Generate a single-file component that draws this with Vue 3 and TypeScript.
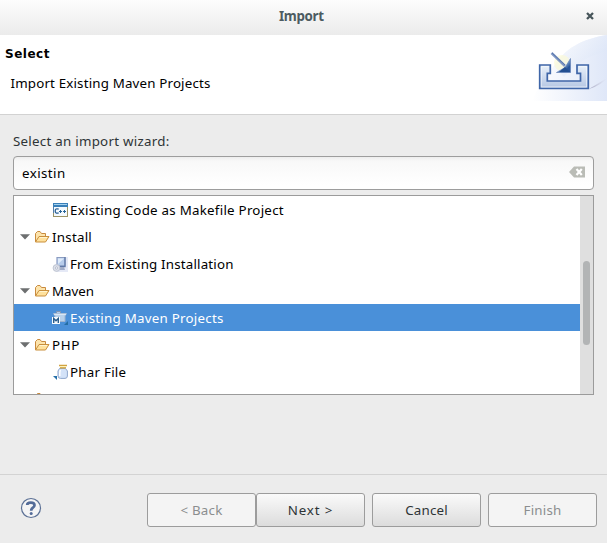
<script setup lang="ts">
import { ref } from 'vue'

type IconName = 'cpp' | 'folder' | 'install' | 'maven' | 'phar'

interface TreeItem {
  label: string
  icon: IconName
  group: boolean
  fit: string
}

const items: TreeItem[] = [
  { label: 'Existing Code as Makefile Project', icon: 'cpp', group: false, fit: 'loose' },
  { label: 'Install', icon: 'folder', group: true, fit: 'loose' },
  { label: 'From Existing Installation', icon: 'install', group: false, fit: 'regular' },
  { label: 'Maven', icon: 'folder', group: true, fit: 'plain' },
  { label: 'Existing Maven Projects', icon: 'maven', group: false, fit: 'loose' },
  { label: 'PHP', icon: 'folder', group: true, fit: 'caps' },
  { label: 'Phar File', icon: 'phar', group: false, fit: 'loose' },
  { label: '', icon: 'folder', group: true, fit: 'plain' },
]

const selected = ref(4)
const filter = ref('existin')

const buttons = [
  { label: '< Back', disabled: true, name: 'back' },
  { label: 'Next >', disabled: false, name: 'forward' },
  { label: 'Cancel', disabled: false, name: 'cancel' },
  { label: 'Finish', disabled: true, name: 'finish' },
]
</script>

<template>
  <div class="dialog">
    <header class="titlebar">
      <span class="title">Import</span>
      <svg class="close" width="8" height="8" viewBox="0 0 8 8">
        <path d="M1 1 L7 7 M7 1 L1 7" stroke="#47555a" stroke-width="2.3" />
      </svg>
    </header>

    <section class="banner">
      <div class="banner-text">
        <h1>Select</h1>
        <p>Import Existing Maven Projects</p>
      </div>
      <svg class="banner-art" width="75" height="66" viewBox="0 0 75 66">
        <defs>
          <linearGradient id="sweep" x1="0" y1="0" x2="1" y2="1">
            <stop offset="0" stop-color="#ffffff" />
            <stop offset="1" stop-color="#cfdcf4" />
          </linearGradient>
          <linearGradient id="floor" x1="0" y1="0" x2="1" y2="0">
            <stop offset="0" stop-color="#ffffff" />
            <stop offset="1" stop-color="#dfe7f8" />
          </linearGradient>
          <linearGradient id="tray" x1="0" y1="0" x2="0" y2="1">
            <stop offset="0" stop-color="#e9f1fa" />
            <stop offset="1" stop-color="#b4c6e3" />
          </linearGradient>
          <linearGradient id="shade" x1="0" y1="0" x2="1" y2="0">
            <stop offset="0" stop-color="#8f8fae" stop-opacity="0.8" />
            <stop offset="1" stop-color="#d8d8e8" stop-opacity="0.1" />
          </linearGradient>
          <linearGradient id="head" x1="0" y1="0" x2="1" y2="1">
            <stop offset="0.4" stop-color="#9fbfe2" />
            <stop offset="0.75" stop-color="#28559a" />
          </linearGradient>
        </defs>
        <path d="M22 31 C33 14 49 4 75 0 V66 H0 C6 52 13 40 22 31Z" fill="url(#floor)" />
        <path d="M22 31 C33 14 49 4 75 0 V16 C58 20 44 28 32 42Z" fill="url(#sweep)" opacity=".55" />
        <path d="M57 54 L75 43 Q70 50 57 54Z" fill="url(#shade)" />
        <circle cx="30" cy="28" r="8" fill="#fbf9d7" opacity=".7" />
        <path
          d="M7.7 30 H18.3 V38.3 H15.3 V46 H48.5 V38.3 H45 V30 H56.3 V53.5 H7.7Z"
          fill="url(#tray)" stroke="#3f66a8" stroke-width="1.7"
        />
        <path d="M9.5 31.7 H16.6 M9.3 32 V51.9 H54.6 V31.7 H47" fill="none" stroke="#fff" stroke-opacity=".55" />
        <path d="M19.5 18 L33 31" stroke="#8198c4" stroke-width="2.5" />
        <path d="M20 18 L33 30" stroke="#5876ac" />
        <path d="M38.5 23.5 V37.5 H24.5 L33 32.5Z" fill="url(#head)" stroke="#6483b8" stroke-width=".7" />
        <path d="M33 32 L38 37 H27Z" fill="#234f91" />
      </svg>
    </section>

    <main class="body">
      <label class="prompt">Select an import wizard:</label>
      <div class="filter">
        <span class="filter-text">{{ filter }}</span>
        <svg width="16" height="12" viewBox="0 0 16 12">
          <path d="M0 6 L5 0.5 H16 V11.5 H5Z" fill="#babcb6" />
          <path d="M7.5 3 L12.8 9 M12.8 3 L7.5 9" stroke="#fff" stroke-width="2.2" />
        </svg>
      </div>

      <div class="tree">
        <div class="rows">
          <div
            v-for="(item, i) in items"
            :key="i"
            class="row"
            :class="[item.group ? 'group' : 'leaf', { selected: i === selected }]"
            @click="selected = i"
          >
            <svg v-if="item.group" class="expander" :class="{ blank: !item.label }" width="10" height="6" viewBox="0 0 10 6">
              <path d="M0 0.3 H10 L5 5.6Z" fill="#6d6f70" />
            </svg>

            <svg v-if="item.icon === 'folder'" class="icon" width="16" height="16" viewBox="0 0 16 16">
              <path d="M1.5 13 V4.5 L3.5 2.5 H6 L7.5 4.5 H11.5 V7" fill="#fde4ac" stroke="#c98b3f" />
              <path d="M1.5 13 L5 7.5 H15 L11.5 13Z" fill="#ffe19c" stroke="#c98f3d" />
              <path d="M5.6 8.5 H13" stroke="#fff4cf" />
            </svg>
            <svg v-else-if="item.icon === 'cpp'" class="icon" width="16" height="16" viewBox="0 0 16 16">
              <rect x="1.5" y="1.5" width="14" height="13" fill="#f4faff" stroke="#9c9365" />
              <path d="M1 1 H16 V5 H1Z" fill="#397fb9" />
              <path d="M2 2.5 H15" stroke="#a4d2ee" />
              <path d="M1.5 5 V11" stroke="#527ea9" />
              <path d="M6.7 7.1 Q3.2 6 3.2 9 Q3.2 12 6.7 10.9" fill="none" stroke="#285e93" stroke-width="1.3" />
              <path d="M7 9.5 H10 M11 9.5 H14 M8.5 8 V11 M12.5 8 V11" stroke="#286599" />
            </svg>
            <svg v-else-if="item.icon === 'install'" class="icon" width="16" height="16" viewBox="0 0 16 16">
              <path d="M4 1 H16 V16 H4Z" fill="#e5e9f6" />
              <rect x="5" y="1.5" width="8" height="8.5" fill="#b7cceb" stroke="#8b9cc0" />
              <path d="M6 2.5 H12 L6 8Z" fill="#dfebfa" />
              <path d="M13 1 V10.5 H7" fill="none" stroke="#6079a7" stroke-width="1.3" />
              <path d="M8 11 L12 11 L13 14 H8Z" fill="#a2adc8" />
              <circle cx="4.5" cy="12" r="3.4" fill="#dde0e9" stroke="#c0c6d3" />
              <circle cx="4.5" cy="12" r="1.1" fill="#fff" stroke="#98a2b8" stroke-width=".6" />
            </svg>
            <svg v-else-if="item.icon === 'maven'" class="icon" width="16" height="16" viewBox="0 0 16 16">
              <path d="M4.5 4 V1.5 H8.5 V3.5" fill="#aecaec" stroke="#8395b1" />
              <path d="M1.5 3.5 H14.5 L13 6 V11.5 H3 V6Z" fill="#b8d1eb" stroke="#9db3cf" />
              <path d="M2 4.3 H14" stroke="#e0edf9" />
              <rect x="0" y="7" width="8" height="7" fill="#f7fbfe" />
              <path d="M1.7 13 V8.5 L4 10.8 L6.3 8.5 V13" fill="none" stroke="#295d8d" stroke-width="1.4" />
              <path d="M16 11 V15 H12Z" fill="#246da3" />
            </svg>
            <svg v-else class="icon" width="16" height="16" viewBox="0 0 16 16">
              <path d="M7.5 4.5 H13.5 L15.4 7 V12 Q15.4 14.4 13 14.4 H8.5 Q6 14.4 6 12 V7Z" fill="#d3e2f8" stroke="#8fa6cc" />
              <path d="M8.5 6 Q7.6 7 7.8 12" fill="none" stroke="#fff" stroke-width="1.5" />
              <path d="M7 1.5 H15 M8 3.8 H14" stroke="#d2a33e" stroke-width="1.4" />
              <path d="M8 2.7 H14" stroke="#fff5b8" />
              <path d="M1 12 H5 V16Z" fill="#2670a9" />
            </svg>
            <span class="label" :class="item.fit">{{ item.label }}</span>
          </div>
        </div>
        <div class="scrollbar"><div class="thumb"></div></div>
      </div>
    </main>

    <footer class="footer">
      <svg class="help" width="22" height="22" viewBox="0 0 22 22">
        <circle cx="11" cy="11" r="9.5" fill="#f4f4f5" stroke="#5b7095" stroke-width="1.2" />
        <path d="M7.2 8 Q7.2 5.6 10.8 5.6 Q14.5 5.6 14.5 8.3 Q14.5 9.8 12.8 10.7 Q11.2 11.6 11.2 13.8" fill="none" stroke="#536b98" stroke-width="2.7" />
        <circle cx="11.2" cy="16.6" r="1.5" fill="#536b98" />
      </svg>
      <div class="buttons">
        <button v-for="b in buttons" :key="b.name" :class="b.name" :disabled="b.disabled">
          <span>{{ b.label }}</span>
        </button>
      </div>
    </footer>
  </div>
</template>

<style>
body { margin: 0; background: #ececec; overflow: hidden; }
</style>

<style scoped>
* { box-sizing: border-box; }
.dialog {
  display: flex;
  flex-direction: column;
  width: 607px;
  height: 543px;
  background: #ececec;
  color: #000;
  font: 13.33px/18px "Noto Sans", "Open Sans", sans-serif;
  overflow: hidden;
}
.titlebar {
  display: flex;
  align-items: center;
  height: 35px;
  padding: 0 13px 3px 279px;
  background: linear-gradient(#fdfdfd, #ebebeb);
  color: #4c5b61;
  font-weight: 700;
  letter-spacing: -0.35px;
}
.close { margin-left: auto; }
.banner {
  display: flex;
  justify-content: space-between;
  height: 80px;
  background: #fff;
  border-bottom: 1px solid #d2d2d2;
}
.banner-text { padding: 10px 0 0 5px; }
h1 { margin: 0; font: 700 12px/18px "DejaVu Sans", sans-serif; letter-spacing: 0.5px; }
p { margin: 11px 0 0 5.5px; letter-spacing: 0.17px; }
.body { height: 359px; padding: 17px 13px 0; }
.prompt { display: block; height: 24px; line-height: 18px; color: #2e3436; letter-spacing: 0.26px; }
.filter {
  display: flex;
  align-items: center;
  justify-content: space-between;
  height: 34px;
  padding: 0 8px;
  border: 1px solid #9d9d9d;
  border-radius: 4px;
  background: linear-gradient(#ededed, #f8f8f8 4px, #fff 28px);
}
.filter-text { letter-spacing: 0.42px; }
.filter svg { position: relative; top: -1px; }
.tree {
  display: flex;
  height: 200px;
  margin-top: 5px;
  border: 1px solid #9b9b9b;
  background: #fff;
  overflow: hidden;
}
.rows { flex: 1; overflow: hidden; }
.row { display: flex; align-items: center; height: 27px; }
.group { padding-left: 6px; }
.leaf { padding-left: 38px; }
.expander { margin-right: 4px; }
.blank { visibility: hidden; }
.icon { flex: none; }
.label { margin-left: 2px; white-space: nowrap; padding-top: 1px; }
.loose { letter-spacing: 0.25px; }
.regular { letter-spacing: 0.18px; }
.caps { letter-spacing: 0.7px; }
.selected { background: #4a90d9; color: #fff; }
.scrollbar { width: 13px; padding: 65px 3px 0; background: #dfdfdf; }
.thumb { width: 7px; height: 84px; border-radius: 4px; background: #b2b4b5; }
.footer {
  display: flex;
  justify-content: space-between;
  height: 69px;
  padding: 18px 10px 0 20px;
  border-top: 1px solid #d3d3d3;
}
.help { margin-top: 4px; }
.buttons { display: flex; }
button {
  width: 109px;
  height: 34px;
  padding: 0;
  border: 1px solid #9c9c9c;
  border-radius: 3px;
  background: linear-gradient(#fafafa, #dcdcdc);
  color: #2e3436;
  font: inherit;
  letter-spacing: 0.2px;
}
button:disabled { background: #f4f4f4; color: #8b8e8f; }
.forward { letter-spacing: 0.9px; }
.cancel, .finish { margin-left: 7px; }
</style>
